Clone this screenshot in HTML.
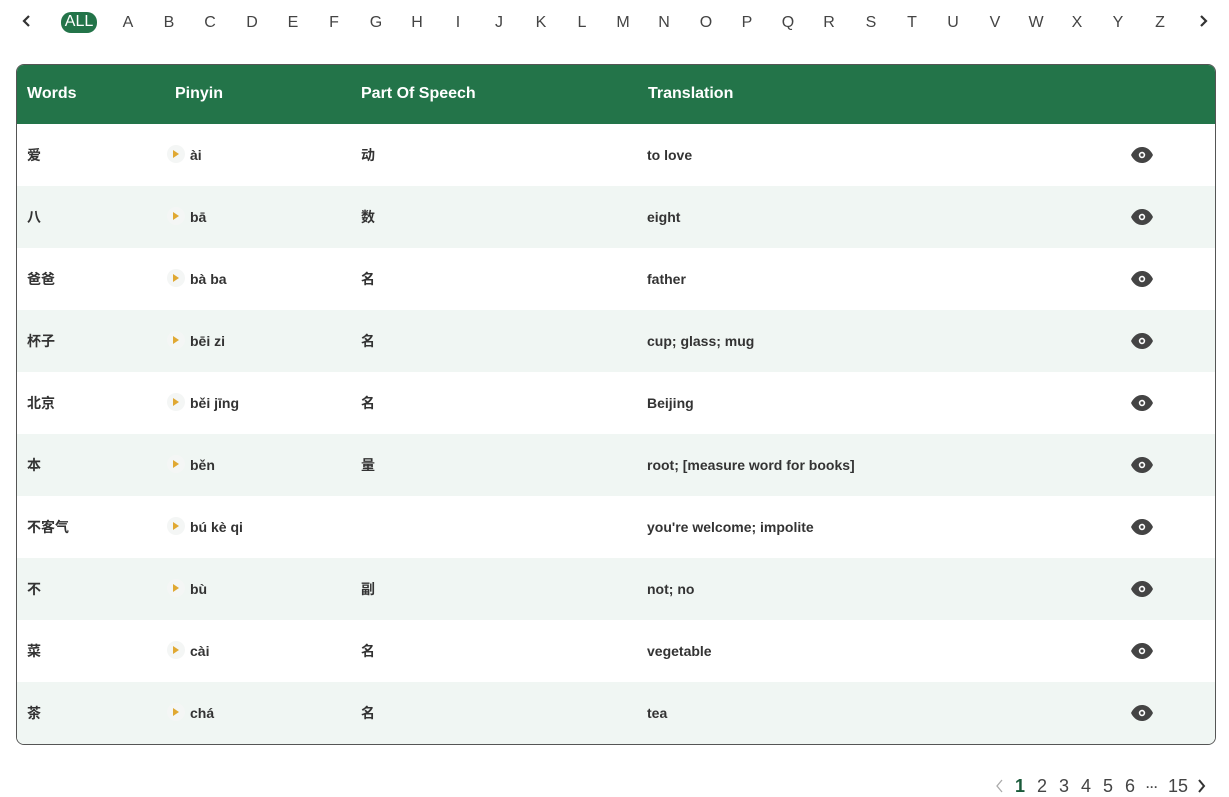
<!DOCTYPE html>
<html><head><meta charset="utf-8"><style>
*{margin:0;padding:0;box-sizing:border-box}
body{width:1229px;height:797px;background:#fff;font-family:"Liberation Sans","Noto Sans CJK SC",sans-serif;color:#333;position:relative;overflow:hidden}
.abs{position:absolute}
.let{position:absolute;top:14px;font-size:16px;line-height:18px;color:#444;transform:translateX(-50%)}
.all{position:absolute;left:61px;top:12px;width:36px;height:21px;border-radius:10px;background:#237449;color:#fff;font-size:16px;text-align:center;line-height:20px}
.tbl{position:absolute;left:16px;top:64px;width:1200px;height:681px;border:1px solid #555;border-radius:8px;overflow:hidden}
.hd{height:59px;background:#237449;color:#fff;font-weight:bold;font-size:16px;position:relative}
.hd span{position:absolute;top:20px;line-height:18px}
.row{height:62px;position:relative;font-size:14px;font-weight:bold;color:#333;background:#fff}
.row:nth-child(even){background:#f0f6f3}
.row span{position:absolute;top:23px;line-height:16px}
.pl{position:absolute;left:150px;top:21px;width:18px;height:18px;border-radius:50%;background:#f4f6f5}
.pl:after{content:"";position:absolute;left:6px;top:5px;border-left:6px solid #e0a832;border-top:4px solid transparent;border-bottom:4px solid transparent}
.eye{position:absolute;left:1113px;top:23px}
.pg{position:absolute;top:776px;font-size:18px;color:#444}
</style></head><body>
<svg class="abs" style="left:22px;top:14px" width="10" height="14"><path d="M7 2L2 7L7 12" stroke="#333" stroke-width="2.2" fill="none"/></svg>
<div class="all">ALL</div>
<div class="let" style="left:128px">A</div><div class="let" style="left:169px">B</div><div class="let" style="left:210px">C</div><div class="let" style="left:252px">D</div><div class="let" style="left:293px">E</div><div class="let" style="left:334px">F</div><div class="let" style="left:376px">G</div><div class="let" style="left:417px">H</div><div class="let" style="left:458px">I</div><div class="let" style="left:499px">J</div><div class="let" style="left:541px">K</div><div class="let" style="left:582px">L</div><div class="let" style="left:623px">M</div><div class="let" style="left:664px">N</div><div class="let" style="left:706px">O</div><div class="let" style="left:747px">P</div><div class="let" style="left:788px">Q</div><div class="let" style="left:829px">R</div><div class="let" style="left:871px">S</div><div class="let" style="left:912px">T</div><div class="let" style="left:953px">U</div><div class="let" style="left:995px">V</div><div class="let" style="left:1036px">W</div><div class="let" style="left:1077px">X</div><div class="let" style="left:1118px">Y</div><div class="let" style="left:1160px">Z</div>
<svg class="abs" style="left:1198px;top:14px" width="10" height="14"><path d="M3 2L8 7L3 12" stroke="#333" stroke-width="2.2" fill="none"/></svg>
<div class="tbl">
<div class="hd"><span style="left:10px">Words</span><span style="left:158px">Pinyin</span><span style="left:344px">Part Of Speech</span><span style="left:631px">Translation</span></div>
<div>
<div class="row"><span style="left:10px">爱</span><i class="pl"></i><span style="left:173px">ài</span><span style="left:344px">动</span><span style="left:630px">to love</span><svg class="eye" width="24" height="16" viewBox="0 0 24 16"><path d="M1 8C4 2 8 0 12 0S20 2 23 8C20 14 16 16 12 16S4 14 1 8Z" fill="#444"/><circle cx="12" cy="8" r="3.2" fill="#fff"/><circle cx="12" cy="8" r="1.6" fill="#444"/></svg></div>
<div class="row"><span style="left:10px">八</span><i class="pl"></i><span style="left:173px">bā</span><span style="left:344px">数</span><span style="left:630px">eight</span><svg class="eye" width="24" height="16" viewBox="0 0 24 16"><path d="M1 8C4 2 8 0 12 0S20 2 23 8C20 14 16 16 12 16S4 14 1 8Z" fill="#444"/><circle cx="12" cy="8" r="3.2" fill="#fff"/><circle cx="12" cy="8" r="1.6" fill="#444"/></svg></div>
<div class="row"><span style="left:10px">爸爸</span><i class="pl"></i><span style="left:173px">bà ba</span><span style="left:344px">名</span><span style="left:630px">father</span><svg class="eye" width="24" height="16" viewBox="0 0 24 16"><path d="M1 8C4 2 8 0 12 0S20 2 23 8C20 14 16 16 12 16S4 14 1 8Z" fill="#444"/><circle cx="12" cy="8" r="3.2" fill="#fff"/><circle cx="12" cy="8" r="1.6" fill="#444"/></svg></div>
<div class="row"><span style="left:10px">杯子</span><i class="pl"></i><span style="left:173px">bēi zi</span><span style="left:344px">名</span><span style="left:630px">cup; glass; mug</span><svg class="eye" width="24" height="16" viewBox="0 0 24 16"><path d="M1 8C4 2 8 0 12 0S20 2 23 8C20 14 16 16 12 16S4 14 1 8Z" fill="#444"/><circle cx="12" cy="8" r="3.2" fill="#fff"/><circle cx="12" cy="8" r="1.6" fill="#444"/></svg></div>
<div class="row"><span style="left:10px">北京</span><i class="pl"></i><span style="left:173px">běi jīng</span><span style="left:344px">名</span><span style="left:630px">Beijing</span><svg class="eye" width="24" height="16" viewBox="0 0 24 16"><path d="M1 8C4 2 8 0 12 0S20 2 23 8C20 14 16 16 12 16S4 14 1 8Z" fill="#444"/><circle cx="12" cy="8" r="3.2" fill="#fff"/><circle cx="12" cy="8" r="1.6" fill="#444"/></svg></div>
<div class="row"><span style="left:10px">本</span><i class="pl"></i><span style="left:173px">běn</span><span style="left:344px">量</span><span style="left:630px">root; [measure word for books]</span><svg class="eye" width="24" height="16" viewBox="0 0 24 16"><path d="M1 8C4 2 8 0 12 0S20 2 23 8C20 14 16 16 12 16S4 14 1 8Z" fill="#444"/><circle cx="12" cy="8" r="3.2" fill="#fff"/><circle cx="12" cy="8" r="1.6" fill="#444"/></svg></div>
<div class="row"><span style="left:10px">不客气</span><i class="pl"></i><span style="left:173px">bú kè qi</span><span style="left:630px">you're welcome; impolite</span><svg class="eye" width="24" height="16" viewBox="0 0 24 16"><path d="M1 8C4 2 8 0 12 0S20 2 23 8C20 14 16 16 12 16S4 14 1 8Z" fill="#444"/><circle cx="12" cy="8" r="3.2" fill="#fff"/><circle cx="12" cy="8" r="1.6" fill="#444"/></svg></div>
<div class="row"><span style="left:10px">不</span><i class="pl"></i><span style="left:173px">bù</span><span style="left:344px">副</span><span style="left:630px">not; no</span><svg class="eye" width="24" height="16" viewBox="0 0 24 16"><path d="M1 8C4 2 8 0 12 0S20 2 23 8C20 14 16 16 12 16S4 14 1 8Z" fill="#444"/><circle cx="12" cy="8" r="3.2" fill="#fff"/><circle cx="12" cy="8" r="1.6" fill="#444"/></svg></div>
<div class="row"><span style="left:10px">菜</span><i class="pl"></i><span style="left:173px">cài</span><span style="left:344px">名</span><span style="left:630px">vegetable</span><svg class="eye" width="24" height="16" viewBox="0 0 24 16"><path d="M1 8C4 2 8 0 12 0S20 2 23 8C20 14 16 16 12 16S4 14 1 8Z" fill="#444"/><circle cx="12" cy="8" r="3.2" fill="#fff"/><circle cx="12" cy="8" r="1.6" fill="#444"/></svg></div>
<div class="row"><span style="left:10px">茶</span><i class="pl"></i><span style="left:173px">chá</span><span style="left:344px">名</span><span style="left:630px">tea</span><svg class="eye" width="24" height="16" viewBox="0 0 24 16"><path d="M1 8C4 2 8 0 12 0S20 2 23 8C20 14 16 16 12 16S4 14 1 8Z" fill="#444"/><circle cx="12" cy="8" r="3.2" fill="#fff"/><circle cx="12" cy="8" r="1.6" fill="#444"/></svg></div>
</div></div>
<svg class="abs" style="left:995px;top:779px" width="10" height="14"><path d="M7 1L2 7L7 13" stroke="#aaa" stroke-width="1.3" fill="none"/></svg>
<div class="pg" style="left:1015px;color:#1a5a3a;font-weight:bold">1</div>
<div class="pg" style="left:1037px">2</div><div class="pg" style="left:1059px">3</div><div class="pg" style="left:1081px">4</div><div class="pg" style="left:1103px">5</div><div class="pg" style="left:1125px">6</div>
<div class="pg" style="left:1146px;font-size:12px;top:780px;font-weight:bold">···</div>
<div class="pg" style="left:1168px">15</div>
<svg class="abs" style="left:1196px;top:779px" width="10" height="14"><path d="M3 1L8 7L3 13" stroke="#333" stroke-width="2" fill="none"/></svg>
</body></html>
